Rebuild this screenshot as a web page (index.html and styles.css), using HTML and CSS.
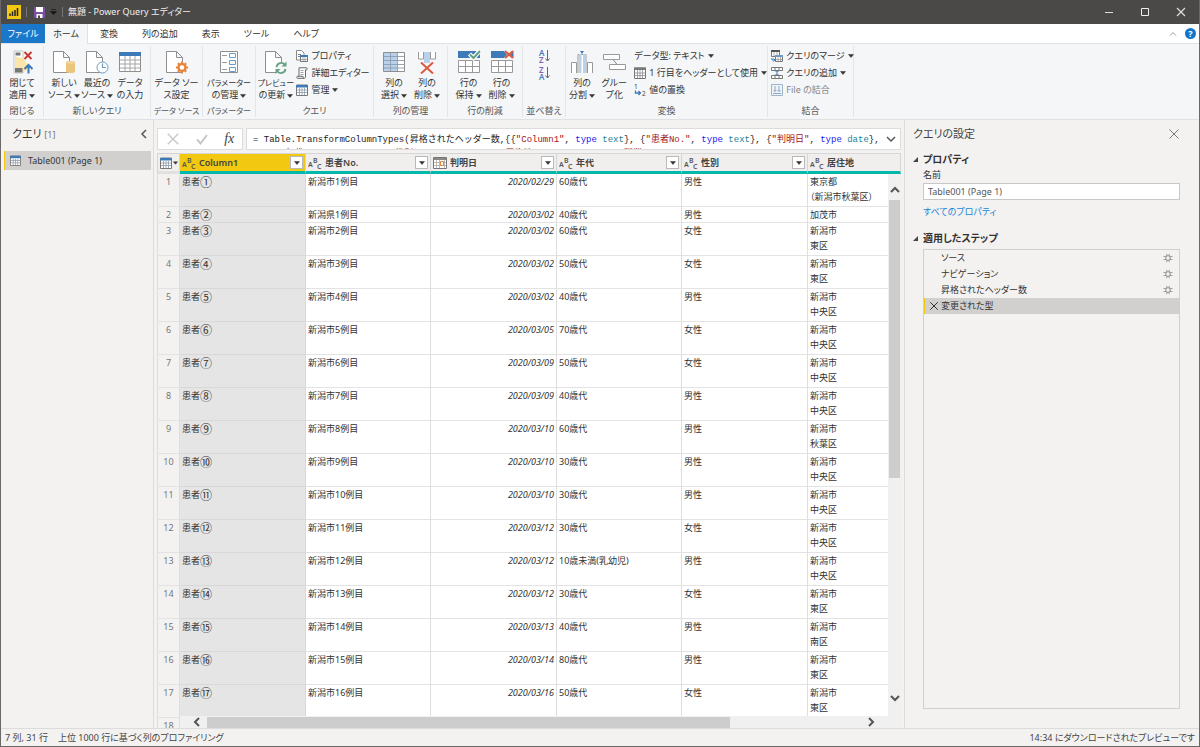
FILE: index.html
```html
<!DOCTYPE html>
<html lang="ja">
<head>
<meta charset="utf-8">
<title>無題 - Power Query エディター</title>
<link rel="stylesheet" href="styles.css">
</head>
<body>
<svg class="defs" aria-hidden="true">
  <symbol id="i-page" viewBox="0 0 24 24"><path d="M3.500 1.500h10l6 6v15h-16zM13.500 1.500v6h6" fill="#fff" stroke="#8f8f8f"/></symbol>
  <symbol id="i-grid" viewBox="0 0 12 12"><path d="M.5 1h11v10.500H.5z" fill="#fff" stroke="#777"/><path d="M0 1h12v2.500H0z" fill="#3f7ab8"/><path d="M1 6h10M1 8.500h10M3.500 4v7M6 4v7M8.500 4v7" stroke="#8c9aa8" stroke-width=".8"/></symbol>
  <symbol id="i-abc" viewBox="0 0 14 14"><g font-family="Noto Sans, sans-serif" font-weight="600" font-size="7" fill="#555"><text x="0" y="11">A</text><text x="5" y="7">B</text><text x="9" y="13">C</text></g></symbol>
  <symbol id="i-date" viewBox="0 0 14 14"><path d="M.5 1.500h13v11H.5z" fill="#fff" stroke="#777"/><path d="M1 2h12v2H1z" fill="#888"/><path d="M1 6.500h12M1 9.500h12M3.500 4v8M6.500 4v8M11.500 4v8" stroke="#aaa" stroke-width=".8"/><path d="M7.500 5.500h3v4h-3z" fill="#fff" stroke="#e8833a"/></symbol>
  <symbol id="i-drop" viewBox="0 0 6 4"><path d="M.5.5h5L3 3.500z" fill="#333" stroke="#333" stroke-width=".5"/></symbol>
  <symbol id="i-gear" viewBox="0 0 10 10"><circle cx="5" cy="5" r="2.300" fill="none" stroke="#a0a0a0" stroke-width="1.200"/><path d="M3.800.8v2M6.200.8v2M3.800 7.200v2M6.200 7.200v2M.5 3.500h2.500M.5 6.500h2.500M7 3.500h2.500M7 6.500h2.500" stroke="#a0a0a0"/></symbol>
  <symbol id="i-x" viewBox="0 0 12 12"><path d="M1.500 1.500l9 9M10.500 1.500l-9 9" fill="none" stroke="currentColor" stroke-width="1.200"/></symbol>
  <symbol id="i-chev" viewBox="0 0 12 12"><path d="M2 4l4 4 4-4" fill="none" stroke="currentColor" stroke-width="2"/></symbol>
</svg>
<div class="window">
  <header class="titlebar">
    <svg class="logo" width="14" height="14" viewBox="0 0 14 14"><path d="M0 0h14v14H0z" fill="#f2c811"/><path d="M3 8.500v2.500M5.500 6.500V11M8 5v6M10.500 3v8" stroke="#222" stroke-width="1.500"/></svg>
    <span class="bar"></span>
    <button class="plain save" aria-label="保存"><svg width="11" height="11" viewBox="0 0 11 11"><path d="M0 0h11v11H0z" fill="#7b4fa3"/><path d="M2 0h7v5H2zM2.500 7h6v4h-6z" fill="#fff"/><path d="M4 8.500h2V11H4z" fill="#4b4947"/></svg></button>
    <button class="plain quick" aria-label="クイック アクセス"><svg width="7" height="6" viewBox="0 0 7 6"><path d="M1 .5h5M.5 2.500h6L3.500 5.500z" fill="#151515" stroke="#151515" stroke-width=".7"/></svg></button>
    <span class="bar"></span>
    <h1>無題 - Power Query エディター</h1>
    <div class="caption">
      <button class="plain" aria-label="最小化"><svg width="10" height="10"><path d="M1 5.500h8" stroke="#ddd"/></svg></button>
      <button class="plain" aria-label="最大化"><svg width="10" height="10"><path d="M1.500 1.500h7v7h-7z" fill="none" stroke="#eee"/></svg></button>
      <button class="plain" aria-label="閉じる"><svg width="10" height="10"><path d="M1 1l8 8M9 1L1 9" stroke="#ddd" stroke-width="1.200"/></svg></button>
    </div>
  </header>

  <nav class="tabs">
    <button class="tab file">ファイル</button>
    <button class="tab active">ホーム</button>
    <button class="tab">変換</button>
    <button class="tab">列の追加</button>
    <button class="tab">表示</button>
    <button class="tab">ツール</button>
    <button class="tab">ヘルプ</button>
    <button class="plain collapse" aria-label="リボンを折りたたむ"><svg width="8" height="6"><path d="M1 4.500L4 1.500l3 3" fill="none" stroke="#999"/></svg></button>
    <button class="help" aria-label="ヘルプ">?</button>
  </nav>

  <section class="ribbon">
    <div class="group g-close">
      <div class="tools">
        <button class="big"><svg viewBox="0 0 24 24"><path d="M4 1h9v22H4z" fill="#fff" stroke="#c4c4c4"/><path d="M5 6l5 2 4-2v3l3 4v7l-4 2H5z" fill="#fbe5ab"/><path d="M5.500 2.500h5v3h-5z" fill="#777"/><path d="M5 18h7.500v4.500H5z" fill="#777"/><path d="M14.500 2l7 7M21.500 2l-7 7" stroke="#c8372d" stroke-width="1.900"/><path d="M18.500 23.500v-8M14.500 19l4-4 4 4" fill="none" stroke="#3f7ab8" stroke-width="2"/></svg><span>閉じて<br>適用<svg class="dd"><use href="#i-drop"/></svg></span></button>
      </div>
      <div class="caption-text">閉じる</div>
    </div>
    <div class="group g-new">
      <div class="tools">
        <button class="big"><svg viewBox="0 0 24 24"><use href="#i-page" width="24" height="24" x="-2"/><path d="M14 12.500c0-2 9-2 9 0v9c0 2-9 2-9 0z" fill="#ecc57d"/><ellipse cx="18.500" cy="12.500" rx="4.500" ry="1.400" fill="#f3d49c"/></svg><span>新しい<br>ソース<svg class="dd"><use href="#i-drop"/></svg></span></button>
        <button class="big"><svg viewBox="0 0 24 24"><use href="#i-page" width="24" height="24" x="-2"/><circle cx="17.500" cy="17.500" r="5.500" fill="#fff" stroke="#6f9cc6"/><path d="M17.500 13.500v4h3.500" fill="none" stroke="#6f9cc6" stroke-width="1.200"/></svg><span>最近の<br>ソース<svg class="dd"><use href="#i-drop"/></svg></span></button>
        <button class="big"><svg viewBox="0 0 24 24"><path d="M1.500 2.500h21v19h-21z" fill="#fff" stroke="#8f8f8f"/><path d="M1 2h22v4H1z" fill="#3f7ab8"/><path d="M2 10h20M2 14h20M2 18h20M7 6v15M12 6v15M17 6v15" stroke="#a5a5a5"/></svg><span>データ<br>の入力</span></button>
      </div>
      <div class="caption-text">新しいクエリ</div>
    </div>
    <div class="group g-source">
      <div class="tools">
        <button class="big"><svg viewBox="0 0 24 24"><use href="#i-page" width="24" height="24" x="-2"/><circle cx="17" cy="17.500" r="3.500" fill="#fff" stroke="#e8833a" stroke-width="2.400"/><path d="M17 11.500v2M17 21.500v2M11 17.500h2M21 17.500h2M12.800 13.300l1.500 1.500M19.700 20.200l1.500 1.500M21.200 13.300l-1.500 1.500M14.300 20.200l-1.500 1.500" stroke="#e8833a" stroke-width="2"/></svg><span>データ ソー<br>ス設定</span></button>
      </div>
      <div class="caption-text tight">データ ソース</div>
    </div>
    <div class="group g-param">
      <div class="tools">
        <button class="big"><svg viewBox="0 0 24 24"><path d="M3.500 1.500h17v21h-17z" fill="#fff" stroke="#8f8f8f"/><path d="M12.500 3.500h6v4h-6zM12.500 10.500h6v4h-6zM12.500 17.500h6v4h-6z" fill="#fff" stroke="#6f9cc6"/><path d="M5 5.500h5M5 12.500h5M5 19.500h5" stroke="#999"/></svg><span><span class="tight">パラメーター</span><br>の管理<svg class="dd"><use href="#i-drop"/></svg></span></button>
      </div>
      <div class="caption-text tight">パラメーター</div>
    </div>
    <div class="group g-query">
      <div class="tools">
        <button class="big"><svg viewBox="0 0 24 24"><use href="#i-page" width="24" height="24" x="-2"/><circle cx="17" cy="18" r="6" fill="#f4f6f8"/><path d="M12.500 17a4.700 4.700 0 0 1 8.500-2M21.500 19a4.700 4.700 0 0 1-8.500 2" fill="none" stroke="#66a085" stroke-width="1.800"/><path d="M22.500 11.500v5h-5zM11.500 24v-5h5z" fill="#66a085"/></svg><span><span class="tight">プレビュー</span><br>の更新<svg class="dd"><use href="#i-drop"/></svg></span></button>
        <div class="stack">
          <button class="small"><svg viewBox="0 0 12 12"><path d="M.5.500h5l2.500 2.500v7H.5z" fill="#fff" stroke="#888"/><path d="M2 4.500h3M2 6.500h2" stroke="#888"/><path d="M4.500 5.500h7v6h-7z" fill="#fff" stroke="#777"/><path d="M4 5h8v2H4z" fill="#3f7ab8"/><path d="M5 9.500h6M7 7v4M9 7v4" stroke="#999" stroke-width=".8"/></svg>プロパティ</button>
          <button class="small"><svg viewBox="0 0 12 12"><path d="M3 9V.8h7.500c1 0 1 2 0 2H9.500v7c0 1.700-1.500 1.500-1.500 1.500H1.500c-1 0-1-2 0-2h5.500c0 1.500 1 2 1 2" fill="#fff" stroke="#666"/><path d="M4.500 3.500h3M4.500 5.500h3M4.500 7.500h3" stroke="#888" stroke-width=".8"/></svg>詳細エディター</button>
          <button class="small"><svg><use href="#i-grid"/></svg>管理<svg class="dd"><use href="#i-drop"/></svg></button>
        </div>
      </div>
      <div class="caption-text">クエリ</div>
    </div>
    <div class="group g-cols">
      <div class="tools">
        <button class="big"><svg viewBox="0 0 24 24"><path d="M1.500 2.500h21v19h-21z" fill="#fff" stroke="#8f8f8f"/><path d="M2 3h13v18H2z" fill="#b9d1ea"/><path d="M2 6.500h20M2 10.500h20M2 14.500h20M2 18h20M8.500 3v18M15.500 3v18" stroke="#8b9cad" stroke-width=".9"/></svg><span>列の<br>選択<svg class="dd"><use href="#i-drop"/></svg></span></button>
        <button class="big"><svg viewBox="0 0 24 24"><path d="M3.500 2v7h5V2M15.500 2v7h5V2" fill="#fff" stroke="#999"/><path d="M9 2h6v11H9z" fill="#b9d1ea"/><path d="M6 12.500l12 11M18 12.500l-12 11" stroke="#dc5b3f" stroke-width="2"/></svg><span>列の<br>削除<svg class="dd"><use href="#i-drop"/></svg></span></button>
      </div>
      <div class="caption-text">列の管理</div>
    </div>
    <div class="group g-rows">
      <div class="tools">
        <button class="big"><svg viewBox="0 0 24 24"><path d="M1 1h22v7H1z" fill="#3f7ab8"/><path d="M1.500 10.500h21v12h-21zM1.500 16.500h21M8.500 10.500v12M15.500 10.500v12" fill="#fff" stroke="#999"/><path d="M12.500 4l4 4L23.500 0" fill="none" stroke="#fff" stroke-width="4.500"/><path d="M13 4.500L16.500 8 23 1" fill="none" stroke="#62a083" stroke-width="2"/></svg><span>行の<br>保持<svg class="dd"><use href="#i-drop"/></svg></span></button>
        <button class="big"><svg viewBox="0 0 24 24"><path d="M1 1h13l3 3.500L14 8H1z" fill="#3f7ab8"/><path d="M20 4.500L23.500 1v7z" fill="#3f7ab8"/><path d="M1.500 10.500h21v12h-21zM1.500 16.500h21M8.500 10.500v12M15.500 10.500v12" fill="#fff" stroke="#999"/><path d="M15 1l8 7M23 1l-8 7" stroke="#dc5b3f" stroke-width="2"/></svg><span>行の<br>削除<svg class="dd"><use href="#i-drop"/></svg></span></button>
      </div>
      <div class="caption-text">行の削減</div>
    </div>
    <div class="group g-sort">
      <div class="tools">
        <div class="stack">
          <button class="small" aria-label="昇順"><svg class="sort" viewBox="0 0 13 14"><g font-family="Noto Sans, sans-serif" font-weight="600" font-size="8"><text x="1" y="7" fill="#3f7ab8">A</text><text x="1" y="13.500" fill="#8661a8">Z</text></g><path d="M9.500 1v11M7.500 9.500l2 2.500 2-2.500" fill="none" stroke="#666"/></svg></button>
          <button class="small" aria-label="降順"><svg class="sort" viewBox="0 0 13 14"><g font-family="Noto Sans, sans-serif" font-weight="600" font-size="8"><text x="1" y="7" fill="#8661a8">Z</text><text x="1" y="13.500" fill="#3f7ab8">A</text></g><path d="M9.500 1v11M7.500 9.500l2 2.500 2-2.500" fill="none" stroke="#666"/></svg></button>
        </div>
      </div>
      <div class="caption-text">並べ替え</div>
    </div>
    <div class="group g-transform">
      <div class="tools">
        <button class="big"><svg viewBox="0 0 24 24"><path d="M1.500 23V12.500h5V23M17.500 23V12.500h5V23M8 23V4.500h8V23" fill="#fff" stroke="#999"/><path d="M9 4h2.500v19H9zM13 4h2.500v19H13z" fill="#b9d1ea"/><path d="M10 1h4l-2 3z" fill="#3f7ab8"/></svg><span>列の<br>分割<svg class="dd"><use href="#i-drop"/></svg></span></button>
        <button class="big"><svg viewBox="0 0 24 24"><path d="M11 9.500l5 6" stroke="#888"/><path d="M1.500 4.500h16v5h-16zM7.500 14.500h16v5h-16z" fill="#fff" stroke="#999"/></svg><span>グルー<br>プ化</span></button>
        <div class="stack">
          <button class="small">データ型: テキスト<svg class="dd"><use href="#i-drop"/></svg></button>
          <button class="small"><svg viewBox="0 0 12 12"><path d="M.5 1h11v10.500H.5z" fill="#fff" stroke="#777"/><path d="M0 .5h12V3H0z" fill="#777"/><path d="M1 6h10M1 8.500h10M3.500 3v8M6 3v8M8.500 3v8" stroke="#8c8c8c" stroke-width=".8"/></svg>1 行目をヘッダーとして使用<svg class="dd"><use href="#i-drop"/></svg></button>
          <button class="small"><svg viewBox="0 0 12 12"><g font-family="Noto Sans, sans-serif" font-size="6.500" fill="#444"><text x="0" y="5">1</text><text x="8" y="12">2</text></g><path d="M1.500 6.500v2.500h5M4.500 7l2 2-2 2" fill="none" stroke="#3f7ab8" stroke-width="1.300"/></svg>値の置換</button>
        </div>
      </div>
      <div class="caption-text">変換</div>
    </div>
    <div class="group g-merge">
      <div class="tools">
        <div class="stack">
          <button class="small"><svg viewBox="0 0 12 12"><path d="M.5.500h8v6h-8zM4.500 5.500h7v6h-7z" fill="#fff" stroke="#777"/><path d="M0 0h9v2H0z" fill="#555"/><path d="M4 5h8v2H4z" fill="#6f9cc6"/><path d="M3 2v4M6 2v3M7 7v4M9.500 7v4M5 9.500h6" stroke="#999" stroke-width=".8"/><path d="M1 8v2h2.500M2.500 8.500L4 10l-1.500 1.500" fill="none" stroke="#3f7ab8"/></svg>クエリのマージ<svg class="dd"><use href="#i-drop"/></svg></button>
          <button class="small"><svg viewBox="0 0 12 12"><path d="M.5.500h11v3H.5zM.5 8.500h11v3H.5zM4 .5v3M8 .5v3M4 8.500v3M8 8.500v3" fill="#fff" stroke="#777"/><path d="M6 3.500v5M4.500 5L6 3.500 7.500 5M4.500 7L6 8.500 7.500 7" fill="none" stroke="#3f7ab8"/></svg>クエリの追加<svg class="dd"><use href="#i-drop"/></svg></button>
          <button class="small" disabled><svg viewBox="0 0 12 12"><path d="M.5.500h11v11H.5z" fill="#eef3f8" stroke="#9db4cc"/><path d="M4 2v5.500M2.500 6L4 7.500 5.500 6M8 2v5.500M6.500 6L8 7.500 9.500 6M2 9.500h8" fill="none" stroke="#8fa9c4"/></svg>File の結合</button>
        </div>
      </div>
      <div class="caption-text">結合</div>
    </div>
  </section>

  <main class="workspace">
    <aside class="queries">
      <div class="pane-head"><h2>クエリ <small>[1]</small></h2><button class="plain" aria-label="折りたたむ"><svg width="10" height="10"><path d="M7 1L3 5l4 4" fill="none" stroke="#555" stroke-width="1.500"/></svg></button></div>
      <button class="query"><svg><use href="#i-grid"/></svg>Table001 (Page 1)</button>
    </aside>

    <section class="preview">
      <div class="formula-row">
        <div class="fx">
          <button class="plain" aria-label="キャンセル"><svg width="14" height="14" viewBox="0 0 12 12"><use href="#i-x"/></svg></button>
          <button class="plain" aria-label="確定"><svg width="14" height="14"><path d="M2 7.500l3.500 4L12 3" fill="none" stroke="#c8c6c4" stroke-width="2"/></svg></button>
          <button class="plain fn" aria-label="関数">fx</button>
        </div>
        <div class="formula">
          <div class="code" role="textbox" aria-label="数式"><div>= Table.TransformColumnTypes(昇格されたヘッダー数,{{<i>"Column1"</i>, <b>type</b> <u>text</u>}, {<i>"患者No."</i>, <b>type</b> <u>text</u>}, {<i>"判明日"</i>, <b>type</b> <u>date</u>},</div><div>    {<i>"年代"</i>, <b>type</b> <u>text</u>}, {<i>"性別"</i>, <b>type</b> <u>text</u>}, {<i>"居住地"</i>, <b>type</b> <u>text</u>}, {<i>"職業"</i>, <b>type</b> <u>text</u>}})</div></div>
          <button class="plain" aria-label="展開"><svg width="12" height="12"><path d="M2 4l4 4 4-4" fill="none" stroke="#555" stroke-width="1.500"/></svg></button>
        </div>
      </div>
      <div class="grid">
        <table>
          <colgroup><col class="c-num"><col class="c-wide"><col class="c-data"><col class="c-wide"><col class="c-data"><col class="c-wide"><col></colgroup>
          <thead><tr>
            <th><div class="th corner"><svg><use href="#i-grid"/></svg><svg class="dd"><use href="#i-drop"/></svg></div></th>
            <th class="sel"><div class="th"><svg><use href="#i-abc"/></svg><span>Column1</span><button aria-label="フィルター"><svg class="dd"><use href="#i-drop"/></svg></button></div></th>
            <th><div class="th"><svg><use href="#i-abc"/></svg><span>患者No.</span><button aria-label="フィルター"><svg class="dd"><use href="#i-drop"/></svg></button></div></th>
            <th><div class="th"><svg><use href="#i-date"/></svg><span>判明日</span><button aria-label="フィルター"><svg class="dd"><use href="#i-drop"/></svg></button></div></th>
            <th><div class="th"><svg><use href="#i-abc"/></svg><span>年代</span><button aria-label="フィルター"><svg class="dd"><use href="#i-drop"/></svg></button></div></th>
            <th><div class="th"><svg><use href="#i-abc"/></svg><span>性別</span><button aria-label="フィルター"><svg class="dd"><use href="#i-drop"/></svg></button></div></th>
            <th><div class="th"><svg><use href="#i-abc"/></svg><span>居住地</span></div></th>
          </tr></thead>
          <tbody>
            <tr><td>1</td><td>患者<span class="no">①</span></td><td>新潟市1例目</td><td>2020/02/29</td><td>60歳代</td><td>男性</td><td>東京都<br>（新潟市秋葉区）</td></tr>
            <tr class="one"><td>2</td><td>患者<span class="no">②</span></td><td>新潟県1例目</td><td>2020/03/02</td><td>40歳代</td><td>男性</td><td>加茂市</td></tr>
            <tr><td>3</td><td>患者<span class="no">③</span></td><td>新潟市2例目</td><td>2020/03/02</td><td>60歳代</td><td>女性</td><td>新潟市<br>東区</td></tr>
            <tr><td>4</td><td>患者<span class="no">④</span></td><td>新潟市3例目</td><td>2020/03/02</td><td>50歳代</td><td>女性</td><td>新潟市<br>東区</td></tr>
            <tr><td>5</td><td>患者<span class="no">⑤</span></td><td>新潟市4例目</td><td>2020/03/02</td><td>40歳代</td><td>男性</td><td>新潟市<br>中央区</td></tr>
            <tr><td>6</td><td>患者<span class="no">⑥</span></td><td>新潟市5例目</td><td>2020/03/05</td><td>70歳代</td><td>女性</td><td>新潟市<br>中央区</td></tr>
            <tr><td>7</td><td>患者<span class="no">⑦</span></td><td>新潟市6例目</td><td>2020/03/09</td><td>50歳代</td><td>女性</td><td>新潟市<br>中央区</td></tr>
            <tr><td>8</td><td>患者<span class="no">⑧</span></td><td>新潟市7例目</td><td>2020/03/09</td><td>40歳代</td><td>男性</td><td>新潟市<br>中央区</td></tr>
            <tr><td>9</td><td>患者<span class="no">⑨</span></td><td>新潟市8例目</td><td>2020/03/10</td><td>60歳代</td><td>男性</td><td>新潟市<br>秋葉区</td></tr>
            <tr><td>10</td><td>患者<span class="no">⑩</span></td><td>新潟市9例目</td><td>2020/03/10</td><td>30歳代</td><td>男性</td><td>新潟市<br>中央区</td></tr>
            <tr><td>11</td><td>患者<span class="no">⑪</span></td><td>新潟市10例目</td><td>2020/03/10</td><td>30歳代</td><td>男性</td><td>新潟市<br>中央区</td></tr>
            <tr><td>12</td><td>患者<span class="no">⑫</span></td><td>新潟市11例目</td><td>2020/03/12</td><td>30歳代</td><td>女性</td><td>新潟市<br>中央区</td></tr>
            <tr><td>13</td><td>患者<span class="no">⑬</span></td><td>新潟市12例目</td><td>2020/03/12</td><td>10歳未満(乳幼児)</td><td>男性</td><td>新潟市<br>中央区</td></tr>
            <tr><td>14</td><td>患者<span class="no">⑭</span></td><td>新潟市13例目</td><td>2020/03/12</td><td>30歳代</td><td>女性</td><td>新潟市<br>東区</td></tr>
            <tr><td>15</td><td>患者<span class="no">⑮</span></td><td>新潟市14例目</td><td>2020/03/13</td><td>40歳代</td><td>男性</td><td>新潟市<br>南区</td></tr>
            <tr><td>16</td><td>患者<span class="no">⑯</span></td><td>新潟市15例目</td><td>2020/03/14</td><td>80歳代</td><td>男性</td><td>新潟市<br>東区</td></tr>
            <tr><td>17</td><td>患者<span class="no">⑰</span></td><td>新潟市16例目</td><td>2020/03/16</td><td>50歳代</td><td>女性</td><td>新潟市<br>東区</td></tr>
            <tr><td>18</td><td></td><td></td><td></td><td></td><td></td><td></td></tr>
          </tbody>
        </table>
        <div class="vbar"><svg class="up" width="12" height="12"><use href="#i-chev"/></svg><div class="track"><div class="thumb"></div></div><svg width="12" height="12"><use href="#i-chev"/></svg></div>
        <div class="hbar"><svg class="left" width="12" height="12"><use href="#i-chev"/></svg><div class="track"><div class="thumb"></div></div><svg class="right" width="12" height="12"><use href="#i-chev"/></svg></div>
      </div>
    </section>

    <aside class="settings">
      <div class="pane-head"><h2>クエリの設定</h2><button class="plain" aria-label="閉じる"><svg width="12" height="12"><path d="M1.500 1.500l9 9M10.500 1.500l-9 9" stroke="#777"/></svg></button></div>
      <h3><svg class="tri" viewBox="0 0 5 5"><path d="M5 0v5H0z" fill="#444"/></svg>プロパティ</h3>
      <div class="props">
        <label for="qname">名前</label>
        <input id="qname" type="text" value="Table001 (Page 1)">
        <a href="#">すべてのプロパティ</a>
      </div>
      <h3><svg class="tri" viewBox="0 0 5 5"><path d="M5 0v5H0z" fill="#444"/></svg>適用したステップ</h3>
      <ul class="steps">
        <li><span>ソース</span><button class="plain" aria-label="設定"><svg width="10" height="10"><use href="#i-gear"/></svg></button></li>
        <li><span>ナビゲーション</span><button class="plain" aria-label="設定"><svg width="10" height="10"><use href="#i-gear"/></svg></button></li>
        <li><span>昇格されたヘッダー数</span><button class="plain" aria-label="設定"><svg width="10" height="10"><use href="#i-gear"/></svg></button></li>
        <li class="current"><button class="plain" aria-label="削除"><svg width="10" height="10"><use href="#i-x"/></svg></button><span>変更された型</span></li>
      </ul>
    </aside>
  </main>

  <footer class="status"><span>7 列, 31 行</span><span>上位 1000 行に基づく列のプロファイリング</span><span class="time">14:34 にダウンロードされたプレビューです</span></footer>
</div>
</body>
</html>
```
FILE: styles.css
```css
* { box-sizing: border-box; }
body {
  margin: 0;
  font: 9px/12px "Noto Sans", "Noto Sans CJK JP", sans-serif;
  font-feature-settings: "palt";
  color: #333;
  background: #f3f2f1;
}
button, input { font: inherit; font-feature-settings: inherit; color: inherit; }
button { margin: 0; padding: 0; border: 0; background: none; white-space: nowrap; }
h1, h2, h3, ul { margin: 0; padding: 0; font-weight: 400; }
svg { display: block; flex: none; }
.defs { position: absolute; width: 0; height: 0; }
.plain { display: flex; align-items: center; justify-content: center; }
.dd { display: inline-block; width: 6px; height: 4px; margin-left: 2px; vertical-align: middle; }
.tight { font-size: 8px; }
.left { transform: rotate(90deg); }
.right { transform: rotate(-90deg); }
.up { transform: rotate(180deg); }

.window {
  display: flex;
  flex-direction: column;
  height: 100vh;
  border: 1px solid #6b6967;
  border-top: 0;
  overflow: hidden;
}

/* title bar */
.titlebar { display: flex; align-items: center; gap: 5px; height: 24px; flex: none; padding-left: 6px; background: #4b4947; color: #eee; }
.titlebar h1 { font-size: 9px; line-height: 14px; }
.bar { width: 1px; height: 10px; background: #777; }
.save { margin-left: 2px; }
.caption { display: flex; margin-left: auto; }
.caption button { width: 36px; height: 24px; }

/* tabs */
.tabs { display: flex; align-items: stretch; height: 20px; flex: none; background: #fff; border-bottom: 1px solid #dfe1e3; }
.tab { padding: 0 12px; }
.tab.file { width: 44px; padding: 0; background: #1b77ca; color: #fff; }
.tab.active { width: 43px; height: 20px; padding: 0; background: #f4f6f8; border-right: 1px solid #dfe1e3; }
.collapse { margin-left: auto; width: 20px; }
.help { align-self: center; width: 11px; height: 11px; margin: 0 3px 0 2px; border-radius: 50%; background: #1076cc; color: #fff; font-weight: 700; line-height: 11px; }

/* ribbon */
.ribbon { display: flex; flex: none; height: 76px; padding: 2px 0; background: #f4f6f8; border-bottom: 1px solid #dfe1e3; }
.group { display: flex; flex-direction: column; flex: none; border-right: 1px solid #e3e5e7; }
.tools { display: flex; justify-content: center; align-items: flex-start; flex: 1; }
.caption-text { text-align: center; white-space: nowrap; color: #555; line-height: 13px; }
.g-close { width: 43px; }
.g-new { width: 107px; }
.g-source { width: 52px; }
.g-param { width: 53px; }
.g-query { width: 118px; }
.g-cols { width: 74px; }
.g-rows { width: 75px; }
.g-sort { width: 43px; }
.g-transform { width: 202px; }
.g-merge { width: 86px; }
.big { display: flex; flex-direction: column; align-items: center; gap: 3px; width: 33px; padding-top: 4px; line-height: 12px; }
.big > svg { width: 24px; height: 24px; }
.stack { display: flex; flex-direction: column; margin-left: 4px; padding-top: 1px; }
.small { display: flex; align-items: center; gap: 3px; height: 17px; }
.small > svg { width: 12px; height: 12px; }
.small > svg.dd { width: 6px; height: 4px; margin-left: 0; }
.small > svg.sort { width: 13px; height: 14px; }
.g-sort .stack { margin-left: 0; }
.small:disabled { color: #888; }

/* workspace */
.workspace { display: flex; flex: 1; min-height: 0; }
.queries { flex: none; width: 153px; border-right: 1px solid #dcdcdc; }
.pane-head { display: flex; align-items: center; justify-content: space-between; height: 28px; }
.pane-head h2 { font-size: 11px; line-height: 16px; }
.pane-head small { font-size: 9px; color: #777; }
.queries .pane-head { padding: 0 4px 0 11px; }
.query { display: flex; align-items: center; gap: 7px; width: 147px; height: 19px; margin: 3px 0 0 3px; padding-left: 5px; background: #d1d0cf; border-left: 1px solid #f2c811; }
.query svg { width: 11px; height: 11px; }

.preview { display: flex; flex-direction: column; flex: 1; min-width: 0; padding: 8px 3px 0; gap: 3px; }
.formula-row { display: flex; gap: 3px; height: 22px; flex: none; }
.fx { display: flex; align-items: center; justify-content: space-around; width: 86px; background: #fff; border: 1px solid #dcdcdc; color: #c8c6c4; }
.fn { font: italic 14px/16px "Liberation Serif", serif; color: #444; }
.formula { display: flex; flex: 1; min-width: 0; background: #fff; border: 1px solid #dcdcdc; overflow: hidden; }
.code { flex: 1; min-width: 0; padding: 4px 0 0 6px; font: 9px/14px "Liberation Mono", "Noto Sans CJK JP", monospace; font-feature-settings: normal; white-space: pre; color: #222; }
.code i { font-style: normal; color: #a31515; }
.code b { font-weight: 400; color: #1a1af0; }
.code u { text-decoration: none; color: #267f99; }
.formula button { width: 18px; }

.grid { position: relative; flex: 1; min-height: 0; overflow: hidden; }
.grid table { width: 100%; table-layout: fixed; border-collapse: separate; border-spacing: 0; }
.c-num { width: 23px; }
.c-wide { width: 126px; }
.c-data { width: 125px; }
th { height: 21px; padding: 0; background: #f0efee; border-top: 1px solid #d5d5d5; border-right: 1px solid #d5d5d5; border-bottom: 3px solid #01b8aa; font-weight: 600; }
th:first-child { border-left: 1px solid #d5d5d5; border-bottom-color: #e1e1e1; }
th.sel { background: #f2c811; }
.th { display: flex; align-items: center; gap: 3px; height: 17px; padding: 0 2px; color: #444; }
.th > svg { width: 14px; height: 14px; }
.th.corner { gap: 1px; }
.corner > svg:first-child { width: 12px; height: 12px; }
.th > svg.dd { width: 5px; height: 4px; margin: 0; }
.th button { display: flex; align-items: center; justify-content: center; width: 13px; height: 13px; margin-left: auto; background: #fff; border: 1px solid #b9b9b9; }
.th button .dd { margin: 0; }
td { height: 33px; padding: 0 2px; vertical-align: top; line-height: 15px; background: #fff; border-right: 1px solid #dedede; border-bottom: 1px solid #e3e3e3; white-space: nowrap; }
.one td { height: 16px; }
td:first-child { padding: 1px 0 0; text-align: center; line-height: 14px; color: #777; background: #f3f2f1; border-left: 1px solid #dedede; }
td:nth-child(2) { background: #e5e5e5; border-color: #d8d8d8; }
td:nth-child(4) { text-align: right; font-style: italic; }
.no { font-size: 12px; line-height: 12px; vertical-align: middle; }
.vbar { position: absolute; top: 21px; right: 0; bottom: 0; width: 13px; display: flex; flex-direction: column; align-items: center; gap: 4px; padding: 10px 0 24px; background: #f0f0f0; color: #555; }
.hbar { position: absolute; left: 23px; right: 13px; bottom: 0; height: 12px; display: flex; align-items: center; gap: 4px; padding: 0 11px; background: #f0f0f0; color: #555; }
.track { flex: 1; }
.vbar .track { width: 11px; }
.hbar .track { height: 11px; }
.vbar .thumb { height: 57%; background: #cdcdcd; }
.hbar .thumb { width: 80%; height: 100%; background: #cdcdcd; }

.settings { display: flex; flex-direction: column; flex: none; width: 295px; padding: 0 19px 19px 8px; border-left: 1px solid #dcdcdc; }
.settings .pane-head { color: #444; }
.settings h3 { display: flex; align-items: center; gap: 5px; margin-top: 4px; font-weight: 600; font-size: 10px; line-height: 14px; }
.tri { width: 5px; height: 5px; }
.props { display: flex; flex-direction: column; padding-left: 10px; }
.props label { line-height: 17px; }
.props input { width: 100%; height: 17px; padding: 0 4px; border: 1px solid #c8c8c8; background: #fff; color: #555; }
.props a { align-self: flex-start; margin: 5px 0 8px; line-height: 14px; color: #1a86d9; text-decoration: none; }
.steps { flex: 1; margin: 4px 0 0 10px; border: 1px solid #cfcfcf; list-style: none; }
.steps li { display: flex; align-items: center; justify-content: space-between; height: 16px; padding: 0 6px 0 17px; }
.steps .current { justify-content: flex-start; gap: 2px; padding-left: 4px; background: #d1d0cf; border-left: 1px solid #f2c811; }

.status { display: flex; align-items: center; gap: 10px; height: 18px; flex: none; padding: 0 4px; border-top: 1px solid #dcdcdc; color: #444; }
.time { margin-left: auto; }
```
